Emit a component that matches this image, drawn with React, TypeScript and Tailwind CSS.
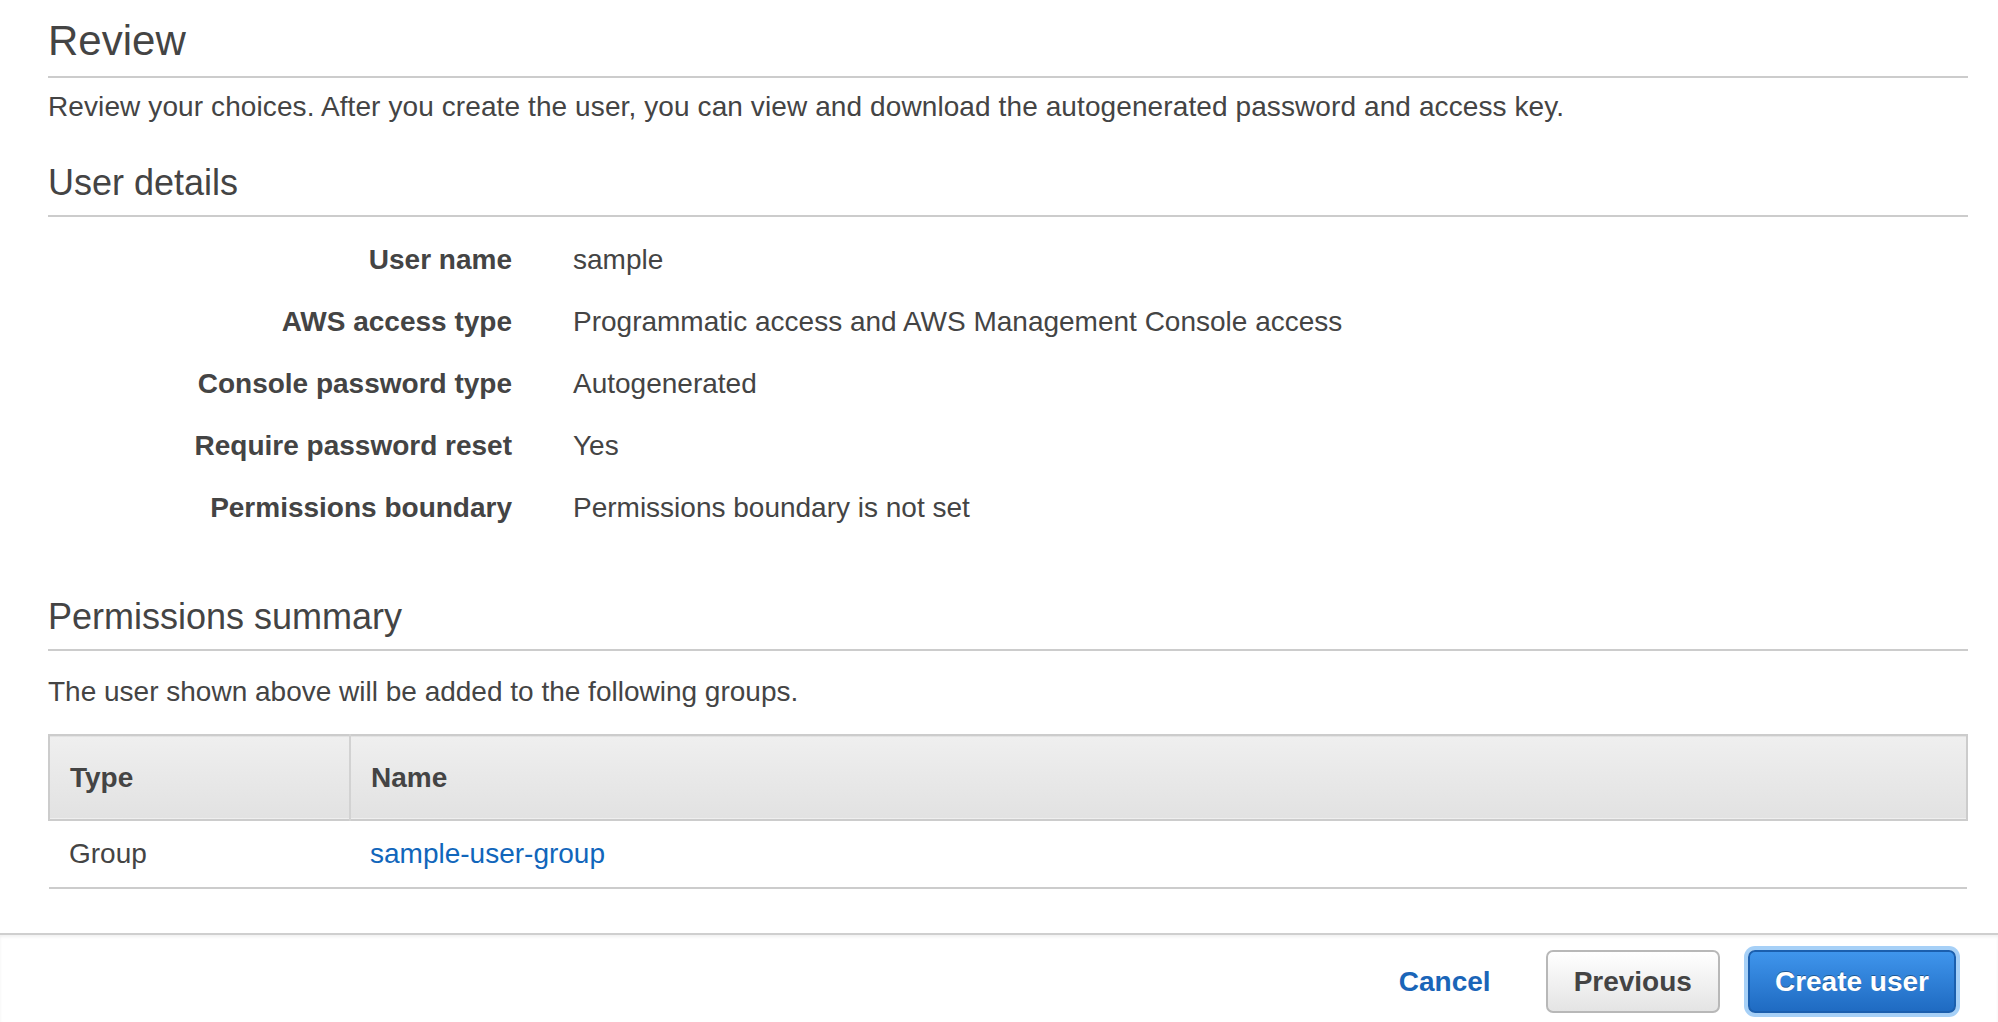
import React from 'react';

const details: { label: string; value: string }[] = [
    { label: 'User name', value: 'sample' },
    { label: 'AWS access type', value: 'Programmatic access and AWS Management Console access' },
    { label: 'Console password type', value: 'Autogenerated' },
    { label: 'Require password reset', value: 'Yes' },
    { label: 'Permissions boundary', value: 'Permissions boundary is not set' },
];

const SectionTitle: React.FC<{ children: React.ReactNode; className?: string }> = ({ children, className = '' }) => (
    <h2 className={`text-[36px] leading-[42px] font-normal text-[#444] pb-[11px] border-b-2 border-[#cccccc] ${className}`}>
        {children}
    </h2>
);

export default function App() {
    return (
        <div
            className="h-screen flex flex-col bg-white text-[#444]"
            style={{ fontFamily: '"Liberation Sans", Arial, Helvetica, sans-serif' }}
        >
            {/* Review content */}
            <div className="flex-1 pl-[48px] pr-[30px]">
                <h1 className="pt-[17px] text-[42px] leading-[48px] font-normal pb-[11px] border-b-2 border-[#cccccc]">
                    Review
                </h1>
                <p className="mt-[12px] text-[28px] leading-[34px] tracking-[0.1px]">
                    Review your choices. After you create the user, you can view and download the autogenerated password and access key.
                </p>

                <SectionTitle className="mt-[38px]">User details</SectionTitle>
                <div className="mt-[12px] flex flex-col">
                    {details.map((d) => (
                        <div key={d.label} className="flex gap-[61px] h-[62px] items-center text-[28px]">
                            <div className="w-[464px] text-right font-bold">{d.label}</div>
                            <div>{d.value}</div>
                        </div>
                    ))}
                </div>

                <SectionTitle className="mt-[57px]">Permissions summary</SectionTitle>
                <p className="mt-[24px] text-[28px] leading-[34px]">
                    The user shown above will be added to the following groups.
                </p>

                <table className="mt-[25px] w-full border-collapse text-[28px]">
                    <thead>
                        <tr className="bg-gradient-to-b from-[#efefef] to-[#e2e2e2] border-2 border-[#cccccc]">
                            <th className="w-[301px] h-[85px] px-[20px] text-left font-bold border-r-2 border-[#d2d2d2]">Type</th>
                            <th className="h-[85px] px-[20px] text-left font-bold">Name</th>
                        </tr>
                    </thead>
                    <tbody>
                        <tr className="border-b-2 border-[#cccccc]">
                            <td className="h-[68px] px-[20px]">Group</td>
                            <td className="h-[68px] px-[20px]">
                                <a className="text-[#1166bb]">sample-user-group</a>
                            </td>
                        </tr>
                    </tbody>
                </table>
            </div>

            {/* Wizard footer */}
            <div className="h-[89px] border-t-2 border-[#cfcfcf] shadow-[inset_0_2px_3px_rgba(0,0,0,0.06)] flex items-center justify-end pr-[42px] pt-[6px]">
                <button className="text-[28px] font-bold text-[#1a65b8] mr-[55px]">Cancel</button>
                <button className="h-[63px] px-[26px] rounded-[7px] border-2 border-[#b8b8b8] bg-gradient-to-b from-[#ffffff] to-[#e4e4e4] text-[28px] font-bold text-[#444] mr-[28px]">
                    Previous
                </button>
                <button className="h-[63px] px-[25px] rounded-[7px] border-2 border-[#1b5fae] bg-gradient-to-b from-[#3f95ec] to-[#1f6bc2] text-[28px] font-bold text-white shadow-[0_0_0_4px_#a6d0f7] [text-shadow:0_-1px_0_rgba(0,0,0,0.35)]">
                    Create user
                </button>
            </div>
        </div>
    );
}
